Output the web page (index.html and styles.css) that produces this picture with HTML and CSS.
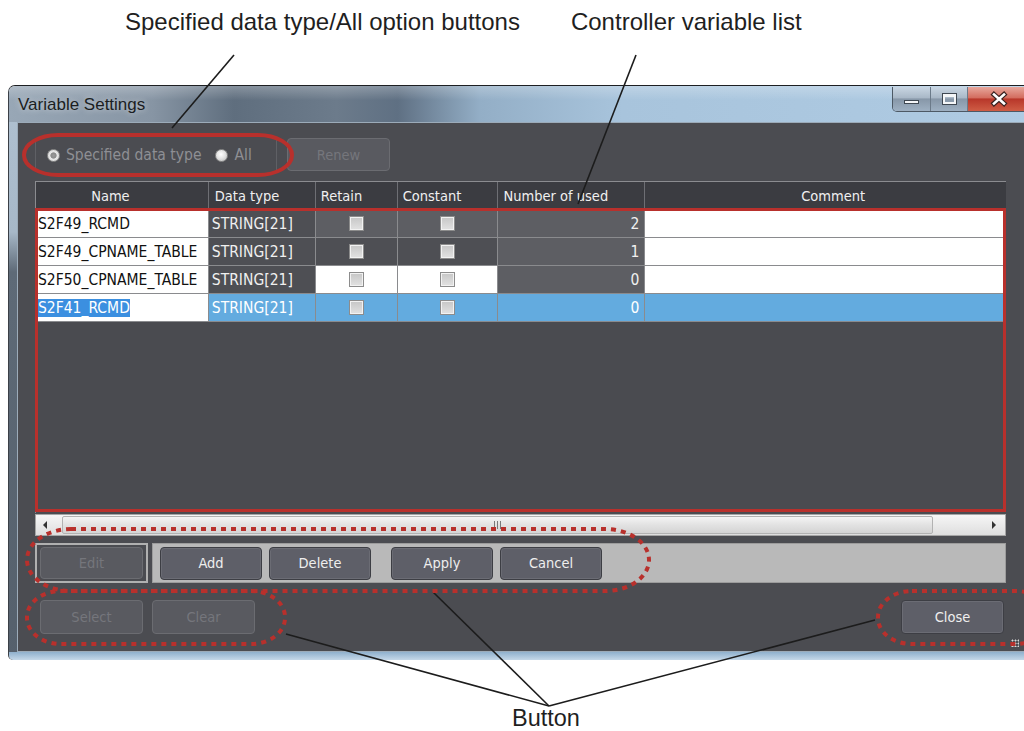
FILE: index.html
```html
<html>
  <head>
    <link rel="stylesheet" href="styles.css">
  </head>
  <body>
    <div class="page">
      <div class="notes-top">
        <span class="note note-types">Specified data type/All option buttons</span>
        <span class="note note-list">Controller variable list</span>
      </div>

      <div class="window">
        <div class="titlebar">
          <span class="title">Variable Settings</span>
          <div class="caption">
            <span class="cap cap-min"><i></i></span>
            <span class="cap cap-max"><i></i></span>
            <span class="cap cap-close">
              <svg width="20" height="16" viewBox="-10 -8 20 16">
                <path d="M-5 -4.5 L5 4.5 M5 -4.5 L-5 4.5" stroke="#3a2220" stroke-width="5" stroke-linecap="square" />
                <path d="M-5 -4.5 L5 4.5 M5 -4.5 L-5 4.5" stroke="#ffffff" stroke-width="2.6" stroke-linecap="square" />
              </svg>
            </span>
          </div>
        </div>

        <div class="frame">
          <div class="client ui">
            <div class="options">
              <div class="radio-group">
                <span class="radio checked"></span>
                <span class="radio-label">Specified data type</span>
                <span class="radio"></span>
                <span class="radio-label">All</span>
              </div>
              <button class="btn disabled renew">Renew</button>
            </div>

            <div class="grid">
              <div class="row head">
                <div class="cell c-name">Name</div>
                <div class="cell c-type">Data type</div>
                <div class="cell c-retain">Retain</div>
                <div class="cell c-const">Constant</div>
                <div class="cell c-num">Number of used</div>
                <div class="cell c-comment">Comment</div>
              </div>
              <div class="row">
                <div class="cell c-name white">S2F49_RCMD</div>
                <div class="cell c-type dark">STRING[21]</div>
                <div class="cell c-retain mid"><span class="check"></span></div>
                <div class="cell c-const mid"><span class="check"></span></div>
                <div class="cell c-num mid">2</div>
                <div class="cell c-comment white"></div>
              </div>
              <div class="row">
                <div class="cell c-name white">S2F49_CPNAME_TABLE</div>
                <div class="cell c-type dark">STRING[21]</div>
                <div class="cell c-retain dark"><span class="check"></span></div>
                <div class="cell c-const dark"><span class="check"></span></div>
                <div class="cell c-num mid">1</div>
                <div class="cell c-comment white"></div>
              </div>
              <div class="row">
                <div class="cell c-name white">S2F50_CPNAME_TABLE</div>
                <div class="cell c-type dark">STRING[21]</div>
                <div class="cell c-retain white"><span class="check"></span></div>
                <div class="cell c-const white"><span class="check"></span></div>
                <div class="cell c-num mid">0</div>
                <div class="cell c-comment white"></div>
              </div>
              <div class="row selected">
                <div class="cell c-name white"><span class="sel-text">S2F41_RCMD</span></div>
                <div class="cell c-type">STRING[21]</div>
                <div class="cell c-retain"><span class="check"></span></div>
                <div class="cell c-const"><span class="check"></span></div>
                <div class="cell c-num">0</div>
                <div class="cell c-comment"></div>
              </div>
              <div class="grid-empty"></div>
            </div>

            <div class="hscroll">
              <span class="arrow arrow-left"></span>
              <div class="track">
                <div class="thumb"><span class="grip"></span></div>
              </div>
              <span class="arrow arrow-right"></span>
            </div>

            <div class="actions">
              <div class="edit-box">
                <button class="btn disabled">Edit</button>
              </div>
              <div class="action-panel">
                <button class="btn">Add</button>
                <button class="btn">Delete</button>
                <button class="btn apply">Apply</button>
                <button class="btn">Cancel</button>
              </div>
            </div>

            <div class="footer">
              <button class="btn disabled">Select</button>
              <button class="btn disabled">Clear</button>
              <span class="spacer"></span>
              <button class="btn close">Close</button>
            </div>
            <span class="grip-corner"></span>
          </div>
        </div>
      </div>

      <div class="note note-button">Button</div>

      <svg class="callouts" width="1024" height="731" viewBox="0 0 1024 731">
        <g fill="none" stroke="#1c1c1c" stroke-width="1.6">
          <path d="M234 55 L172 128" />
          <path d="M636 55 L578 204" />
          <path d="M286 634 L549 706" />
          <path d="M433 592 L549 706" />
          <path d="M875 620 L549 706" />
        </g>
        <g fill="none" stroke="#b8302c">
          <rect x="24" y="135" width="268" height="40" rx="34" ry="20" stroke-width="4" />
          <rect x="36.5" y="209.5" width="968" height="301" stroke-width="3" />
        </g>
        <g fill="none" stroke="#b8302c" stroke-width="4" stroke-dasharray="5 5">
          <rect x="27" y="529" width="622" height="62" rx="44" ry="31" />
          <rect x="27" y="591" width="258" height="53" rx="34" ry="26" />
          <rect x="878" y="591" width="172" height="53" rx="34" ry="26" />
        </g>
      </svg>
    </div>
  </body>
</html>
```

FILE: styles.css
```css
body,
html {
  margin: 0;
  background: #ffffff;
}
* {
  box-sizing: border-box;
}
.page {
  position: relative;
  width: 1024px;
  height: 731px;
  overflow: hidden;
  background: #ffffff;
}
.ui,
.ui button {
  font-family: 'DejaVu Sans Condensed', 'DejaVu Sans', sans-serif;
  font-stretch: condensed;
}

/* annotation labels */
.note {
  font-family: 'Liberation Sans', Arial, sans-serif;
  font-size: 24px;
  line-height: 28px;
  color: #1f1f1f;
  white-space: nowrap;
}
.notes-top {
  height: 85px;
  padding: 8px 0 0 125px;
  display: flex;
  gap: 51px;
}
.note-button {
  font-size: 23.5px;
  margin: 44px 0 0 512px;
}
.callouts {
  position: absolute;
  left: 0;
  top: 0;
  pointer-events: none;
}

/* window chrome */
.window {
  margin-left: 8px;
  width: 1024px;
  border-top: 1px solid #1d1f22;
  border-left: 1px solid #3b4047;
  border-radius: 7px 0 0 5px;
  overflow: hidden;
}
.titlebar {
  height: 36px;
  display: flex;
  align-items: center;
  padding-left: 9px;
  background:
    linear-gradient(to bottom, rgba(255, 255, 255, 0.25), rgba(255, 255, 255, 0) 40%),
    linear-gradient(to right, #98a7b6 0, #8795a4 14%, #5f6e7e 22%, #6c7b8b 32%, #5f7083 38%, #93aec6 46%, #a8c4dc 60%, #afcbe3 100%);
}
.title {
  font-family: 'Liberation Sans', Arial, sans-serif;
  font-size: 17px;
  color: #1b1e22;
  text-shadow: 0 0 6px rgba(255, 255, 255, 0.6);
  margin-top: 1px;
}
.caption {
  margin-left: auto;
  margin-right: 2px;
  align-self: flex-start;
  margin-top: 1px;
  display: flex;
  height: 25px;
  border: 1px solid #4d5965;
  border-top: none;
  border-radius: 0 0 5px 5px;
  overflow: hidden;
}
.cap {
  display: flex;
  align-items: center;
  justify-content: center;
  height: 100%;
  border-left: 1px solid #6b7a89;
}
.cap-min,
.cap-max {
  width: 37px;
  background: linear-gradient(to bottom, #c9d6e3 0, #a9b8c7 45%, #8797a8 50%, #9eb0c2 100%);
}
.cap-min {
  border-left: none;
}
.cap-min i {
  display: block;
  width: 15px;
  height: 4px;
  margin-top: 6px;
  background: #f4f6f8;
  border: 1px solid #3f4852;
}
.cap-max i {
  display: block;
  width: 13px;
  height: 10px;
  background: transparent;
  border: 2px solid #f4f6f8;
  border-top-width: 3px;
  outline: 1px solid #3f4852;
}
.cap-close {
  width: 62px;
  background: linear-gradient(to bottom, #e7a79c 0, #d36d5f 45%, #b8372a 50%, #cf5d45 100%);
}
.frame {
  padding-left: 8px;
  padding-bottom: 8px;
  background:
    linear-gradient(to bottom, #8fb0cd, #c5d8e9) bottom / 100% 8px no-repeat,
    linear-gradient(to bottom, #aebfcf 0, #a7b8c8 110px, #5e6a77 150px, #55606c 100%);
}
.client {
  position: relative;
  height: 530px;
  background: #4b4c51;
  border: 1px solid #9cabb9;
  border-right: none;
  padding: 15px 0 0 17px;
}

/* radio row */
.options {
  display: flex;
  height: 34px;
  align-items: flex-start;
  gap: 10px;
}
.radio-group {
  width: 242px;
  height: 34px;
  display: flex;
  align-items: center;
  padding-left: 11px;
  border-left: 1px solid #5f6065;
  border-right: 1px solid #5f6065;
  color: #8e8f94;
  font-size: 15.5px;
}
.radio {
  width: 13px;
  height: 13px;
  border-radius: 50%;
  background: radial-gradient(circle at 45% 40%, #ffffff 0, #e4e4e4 45%, #b5b5b5 100%);
  border: 1px solid #8c8c8c;
  margin-right: 6px;
}
.radio.checked {
  background: radial-gradient(circle, #9a9a9a 0, #8a8a8a 35%, #e9e9e9 45%, #cfcfcf 100%);
}
.radio-label {
  margin-right: 14px;
}
.btn {
  width: 103px;
  height: 33px;
  border: 1px solid #3d3e44;
  border-radius: 4px;
  background: #5e5f68;
  box-shadow: inset 0 0 0 1px #6b6c74;
  color: #eeeeee;
  font-size: 14.5px;
  padding: 0;
}
.btn.disabled {
  background: #595a60;
  border-color: #6b6c71;
  box-shadow: none;
  color: #75767c;
}
.renew {
  width: 103px;
  height: 33px;
  margin-top: 0;
}

/* variable grid */
.grid {
  width: 971px;
  height: 332px;
  margin-top: 9px;
  background: #4a4b50;
  border-left: 1px solid #8b8c90;
  display: flex;
  flex-direction: column;
}
.row {
  display: flex;
  height: 28px;
  font-size: 15.5px;
}
.row.head {
  height: 29px;
  background: #3b3c41;
  color: #e8e8e8;
  font-size: 14.5px;
  border-top: 1px solid #8b8c90;
}
.cell {
  height: 100%;
  display: flex;
  align-items: center;
  border-right: 1px solid #8a8b8e;
  border-bottom: 1px solid #8a8b8e;
  padding: 0 5px;
  white-space: nowrap;
  overflow: hidden;
  color: #f0f0f0;
}
.head .cell {
  border-right-color: #6e6f74;
  border-bottom: none;
}
.c-name { width: 173px; padding-left: 2px; }
.c-type { width: 107px; padding-left: 3px; }
.c-retain { width: 82px; justify-content: center; }
.c-const { width: 100px; justify-content: center; }
.c-num { width: 148px; justify-content: flex-end; }
.c-comment { width: 361px; border-right: none; }
.head .c-name { justify-content: center; padding-right: 25px; }
.head .c-type { padding-left: 6px; }
.head .c-retain,
.head .c-const { justify-content: flex-start; }
.head .c-num { justify-content: flex-start; padding-left: 6px; }
.head .c-comment { justify-content: center; padding-left: 20px; }
.cell.white { background: #ffffff; color: #111111; }
.cell.dark { background: #4e4f54; }
.cell.mid { background: #5d5e63; }
.row.selected .cell { background: #63abdf; color: #ffffff; }
.row.selected .cell.white { background: #ffffff; }
.sel-text {
  background: #3b8fe0;
  color: #ffffff;
}
.check {
  width: 15px;
  height: 15px;
  border: 1px solid #8c8c8c;
  background: linear-gradient(to bottom, #c6c6c6, #e2e2e2);
  box-shadow: inset 0 0 0 1px #f2f2f2;
}
.grid-empty {
  flex: 1;
}

/* scrollbar */
.hscroll {
  width: 971px;
  height: 22px;
  margin-top: 1px;
  display: flex;
  align-items: center;
  background: linear-gradient(to bottom, #f6f6f6, #dedede);
  border: 1px solid #a5a5a5;
}
.arrow {
  width: 22px;
  height: 100%;
  display: flex;
  align-items: center;
  justify-content: center;
}
.arrow::before {
  content: '';
  border-top: 4px solid transparent;
  border-bottom: 4px solid transparent;
}
.arrow-left::before {
  border-right: 4px solid #333;
  margin-left: -4px;
}
.arrow-right::before {
  border-left: 4px solid #333;
}
.track {
  flex: 1;
  height: 100%;
  padding: 1px 0 1px 4px;
}
.thumb {
  width: 871px;
  height: 100%;
  border: 1px solid #b2b2b2;
  border-radius: 2px;
  background: linear-gradient(to bottom, #f4f4f4, #e2e2e2 50%, #d4d4d4);
  display: flex;
  align-items: center;
  justify-content: center;
}
.grip {
  width: 7px;
  height: 8px;
  background: repeating-linear-gradient(to right, #7a7a7a 0, #7a7a7a 1px, transparent 1px, transparent 3px);
}

/* button rows */
.actions {
  display: flex;
  margin-top: 7px;
  height: 40px;
  gap: 4px;
}
.edit-box {
  width: 113px;
  height: 40px;
  border: 2px solid #b0b0b0;
  padding: 2px 3px;
}
.edit-box .btn {
  width: 103px;
  height: 32px;
}
.action-panel {
  width: 854px;
  height: 40px;
  background: #b9b9b9;
  border: 1px solid #9c9c9c;
  display: flex;
  align-items: center;
  padding-left: 7px;
  gap: 7px;
}
.action-panel .btn {
  width: 102px;
}
.action-panel .apply {
  margin-left: 13px;
}
.footer {
  display: flex;
  width: 971px;
  margin-top: 17px;
  padding-left: 5px;
  gap: 9px;
}
.footer .btn {
  height: 34px;
}
.spacer {
  flex: 1;
}
.footer .close {
  margin-right: 2px;
}
.grip-corner {
  position: absolute;
  left: 993px;
  top: 516px;
  width: 8px;
  height: 8px;
  background: radial-gradient(circle, #d8d8d8 0.8px, transparent 1.2px) 0 0 / 3px 3px;
}
```
